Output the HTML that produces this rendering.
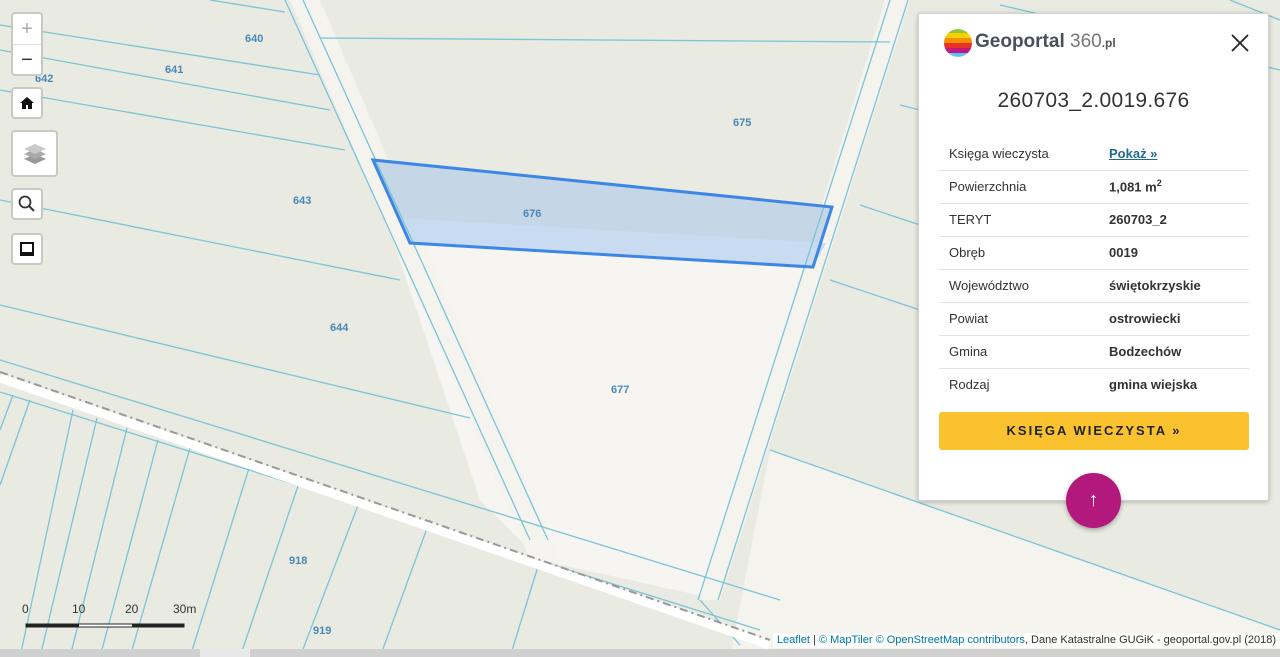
<!DOCTYPE html>
<html><head><meta charset="utf-8"><style>
*{margin:0;padding:0;box-sizing:border-box}
body{width:1280px;height:657px;overflow:hidden;position:relative;font-family:"Liberation Sans",sans-serif;background:#e9eae1}
svg.map{position:absolute;left:0;top:0}
.ctl{position:absolute;left:11px;background:#fff;border:2px solid #c9c9c4;border-radius:4px;display:flex;align-items:center;justify-content:center}
.panel{position:absolute;left:918px;top:13px;width:351px;height:488px;background:#fff;border:1px solid #d4d4d4;border-radius:3px;box-shadow:0 1px 5px rgba(0,0,0,.25)}
table{position:absolute;left:20px;top:123px;width:310px;border-collapse:collapse;font-size:13px;color:#333}
td{height:33px;border-bottom:1px solid #e2e2e2;padding-left:10px}
tr:last-child td{border-bottom:none}
td.v{font-weight:bold;width:150px}
.btn{position:absolute;left:20px;top:398px;width:310px;height:38px;background:#fbc230;border-radius:3px;text-align:center;line-height:38px;font-weight:bold;font-size:13px;letter-spacing:2px;color:#222}
.up{position:absolute;left:1066px;top:473px;width:55px;height:55px;border-radius:50%;background:#b3197c;color:#fff;text-align:center;line-height:55px;font-size:20px;box-shadow:0 2px 5px rgba(0,0,0,.3)}
.attr{position:absolute;right:0;top:633px;background:rgba(255,255,255,.75);font-size:11px;color:#333;padding:1px 4px 2px 4px}
.attr a{color:#0078a8;text-decoration:none}
</style></head><body>
<svg class="map" width="1280" height="657" viewBox="0 0 1280 657">
<rect width="1280" height="657" fill="#e9eae1"/>
<polygon points="395,245 830,240 720,600 540,560 480,500" fill="#f6f5f1"/>
<polygon points="770,450 1280,630 1280,657 730,657" fill="#f4f3ee"/>
<polygon points="290,0 320,0 560,560 530,560" fill="#f4f3ee"/>
<polygon points="885,0 910,0 720,600 700,600" fill="#f4f3ee"/>
<polygon points="373,160 832,207 813,267 410,243" fill="#c5d6e6"/>
<polygon points="400,218 826,243 813,267 410,243" fill="#c9dbf0"/>
<g stroke="#7cc4d8" stroke-width="1.3" fill="none">
<line x1="285" y1="0" x2="530" y2="540"/><line x1="303" y1="0" x2="548" y2="540"/>
<line x1="890" y1="0" x2="698" y2="600"/><line x1="908" y1="0" x2="718" y2="600"/>
<line x1="0" y1="25" x2="320" y2="75"/><line x1="0" y1="50" x2="330" y2="110"/><line x1="0" y1="90" x2="345" y2="150"/>
<line x1="210" y1="0" x2="285" y2="12"/>
<line x1="0" y1="200" x2="400" y2="280"/><line x1="0" y1="305" x2="470" y2="418"/>
<line x1="320" y1="38" x2="890" y2="42"/>
<line x1="0" y1="392" x2="760" y2="630"/><line x1="0" y1="360" x2="780" y2="600"/>
<line x1="830" y1="280" x2="920" y2="310"/><line x1="860" y1="205" x2="920" y2="225"/>
<line x1="770" y1="450" x2="1280" y2="630"/><line x1="900" y1="105" x2="920" y2="110"/>
<line x1="1000" y1="5" x2="1280" y2="70"/><line x1="1230" y1="0" x2="1280" y2="20"/>
<line x1="13" y1="395" x2="0" y2="430"/><line x1="30" y1="400" x2="0" y2="485"/>
<line x1="73" y1="410" x2="20" y2="657"/><line x1="97" y1="418" x2="40" y2="657"/>
<line x1="127" y1="428" x2="70" y2="657"/><line x1="158" y1="440" x2="100" y2="657"/>
<line x1="190" y1="448" x2="130" y2="657"/><line x1="250" y1="465" x2="190" y2="657"/>
<line x1="300" y1="480" x2="240" y2="657"/><line x1="360" y1="500" x2="300" y2="657"/>
<line x1="430" y1="520" x2="380" y2="657"/><line x1="540" y1="560" x2="510" y2="657"/>
<line x1="700" y1="600" x2="740" y2="645"/>
</g>
<path d="M0,378 L770,645" stroke="#fff" stroke-width="9"/>
<path d="M0,372 L770,640" stroke="#999" stroke-width="2" stroke-dasharray="8,4,2,4"/>
<polygon points="373,160 832,207 813,267 410,243" fill="none" stroke="#3d86e6" stroke-width="3"/>
<g fill="#4a88b8" font-family="Liberation Sans" font-weight="bold" font-size="11">
<text x="245" y="42">640</text><text x="165" y="73">641</text><text x="35" y="82">642</text>
<text x="293" y="204">643</text><text x="330" y="331">644</text><text x="733" y="126">675</text>
<text x="523" y="217">676</text><text x="611" y="393">677</text><text x="289" y="564">918</text><text x="313" y="634">919</text>
</g>
<g font-family="Liberation Sans" font-size="12" fill="#333"><text x="22" y="613">0</text><text x="72" y="613">10</text><text x="125" y="613">20</text><text x="173" y="613">30m</text></g>
<rect x="26" y="624" width="158" height="3" fill="#fff" stroke="#222" stroke-width="1"/>
<rect x="26" y="624" width="53" height="3" fill="#222"/><rect x="132" y="624" width="52" height="3" fill="#222"/>
<rect x="0" y="649" width="1280" height="8" fill="#d0d0d0"/><rect x="200" y="649" width="50" height="8" fill="#e8e8e8"/>
</svg>
<div class="ctl" style="top:12px;height:64px;width:32px;flex-direction:column;color:#aaa;font-size:20px"><div style="height:30px;line-height:30px">+</div><div style="height:30px;line-height:30px;color:#333;border-top:1px solid #ddd;width:100%;text-align:center">−</div></div>
<div class="ctl" style="top:87px;width:32px;height:32px"><svg width="16" height="16" viewBox="0 0 16 16"><path d="M8 2L1 8h2v6h4v-4h2v4h4V8h2z" fill="#111"/></svg></div>
<div class="ctl" style="top:130px;width:47px;height:47px"><svg width="26" height="24" viewBox="0 0 26 24"><path d="M13 12l11 5-11 5-11-5z" fill="#999"/><path d="M13 7l11 5-11 5-11-5z" fill="#aaa"/><path d="M13 2l11 5-11 5-11-5z" fill="#c8c8c8"/></svg></div>
<div class="ctl" style="top:188px;width:32px;height:32px"><svg width="18" height="18"><circle cx="7" cy="7" r="5.5" fill="none" stroke="#333" stroke-width="1.8"/><line x1="11" y1="11" x2="16" y2="16" stroke="#333" stroke-width="2"/></svg></div>
<div class="ctl" style="top:233px;width:32px;height:32px"><svg width="16" height="16"><rect x="2" y="2" width="12" height="12" fill="none" stroke="#111" stroke-width="2"/><rect x="2" y="11" width="12" height="3" fill="#111"/></svg></div>
<div class="panel">
<svg style="position:absolute;left:23px;top:13px" width="32" height="32" viewBox="0 0 32 32"><clipPath id="c"><circle cx="16" cy="16" r="14"/></clipPath><g clip-path="url(#c)"><rect y="0" width="32" height="6" fill="#8cc63f"/><rect y="6" width="32" height="5" fill="#f7d000"/><rect y="11" width="32" height="5" fill="#f39200"/><rect y="16" width="32" height="5" fill="#e5332a"/><rect y="21" width="32" height="5" fill="#c2187f"/><rect y="26" width="32" height="6" fill="#5bc5f2"/></g></svg>
<div style="position:absolute;left:56px;top:17px;font-size:19px;color:#444;white-space:nowrap"><b style="color:#4a4f5a">Geoportal</b> <span style="color:#777;font-weight:300">360</span><span style="font-size:12px;font-weight:bold;color:#555">.pl</span></div>
<svg style="position:absolute;right:19px;top:20px" width="18" height="18"><path d="M1 1L17 17M17 1L1 17" stroke="#222" stroke-width="1.8"/></svg>
<div style="position:absolute;left:0;width:100%;top:75px;text-align:center;font-size:21px;color:#333;letter-spacing:.3px">260703_2.0019.676</div>
<table>
<tr><td>Księga wieczysta</td><td class="v"><a style="color:#1d6c93;text-decoration:underline">Pokaż »</a></td></tr>
<tr><td>Powierzchnia</td><td class="v">1,081 m<sup style="font-size:9px">2</sup></td></tr>
<tr><td>TERYT</td><td class="v">260703_2</td></tr>
<tr><td>Obręb</td><td class="v">0019</td></tr>
<tr><td>Województwo</td><td class="v">świętokrzyskie</td></tr>
<tr><td>Powiat</td><td class="v">ostrowiecki</td></tr>
<tr><td>Gmina</td><td class="v">Bodzechów</td></tr>
<tr><td>Rodzaj</td><td class="v">gmina wiejska</td></tr>
</table>
<div class="btn">KSIĘGA WIECZYSTA »</div>
</div>
<div class="up">↑</div>
<div class="attr"><a>Leaflet</a> | <a>© MapTiler</a> <a>© OpenStreetMap contributors</a>, Dane Katastralne GUGiK - geoportal.gov.pl (2018)</div>
</body></html>
